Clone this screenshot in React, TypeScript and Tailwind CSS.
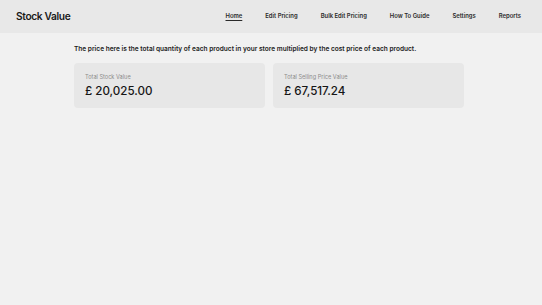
const links = ["Home", "Edit Pricing", "Bulk Edit Pricing", "How To Guide", "Settings", "Reports"];

function StatCard({ label, value }: { label: string; value: string }) {
  return (
    <div className="rounded-[4px] bg-[#e7e7e7] px-[11px] pt-[10px] pb-[10px]">
      <div className="text-[5.6px] leading-[8px] text-[#8c8c8c]">{label}</div>
      <div className="mt-[3px] text-[11.6px] font-medium leading-[14px] text-[#161616]">{value}</div>
    </div>
  );
}

export default function App() {
  return (
    <div className="min-h-[305px] bg-[#f1f1f1] font-['Inter',sans-serif]">
      <header className="flex h-[33px] items-center justify-between bg-[#e8e8e8] pl-[16px] pr-[21px]">
        <h1 className="text-[10.2px] font-semibold tracking-[-0.035em] text-[#1a1a1a]">Stock Value</h1>
        <nav className="flex items-center gap-[23px]">
          {links.map((l) => (
            <a
              key={l}
              className={
                "text-[5.9px] font-semibold text-[#2a2a2a] " + (l === "Home" ? "underline underline-offset-[1.5px]" : "")
              }
            >
              {l}
            </a>
          ))}
        </nav>
      </header>

      <main className="ml-[74px] w-[390px] pt-[12px]">
        <p className="whitespace-nowrap text-[6.55px] font-semibold leading-[8px] text-[#1c1c1c]">
          The price here is the total quantity of each product in your store multiplied by the cost price of each product.
        </p>
        <div className="mt-[10px] grid grid-cols-2 gap-[8px]">
          <StatCard label="Total Stock Value" value="£ 20,025.00" />
          <StatCard label="Total Selling Price Value" value="£ 67,517.24" />
        </div>
      </main>
    </div>
  );
}
